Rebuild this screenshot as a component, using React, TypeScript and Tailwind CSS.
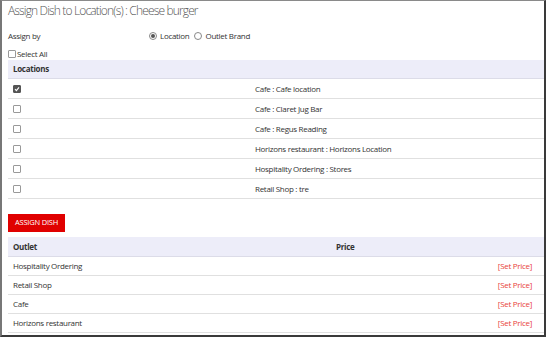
import React from "react";

const locations = [
  { name: "Cafe : Cafe location", checked: true },
  { name: "Cafe : Claret Jug Bar", checked: false },
  { name: "Cafe : Regus Reading", checked: false },
  { name: "Horizons restaurant : Horizons Location", checked: false },
  { name: "Hospitality Ordering : Stores", checked: false },
  { name: "Retail Shop : tre", checked: false },
];

const outlets = ["Hospitality Ordering", "Retail Shop", "Cafe", "Horizons restaurant"];

function Box({ checked }: { checked?: boolean }) {
  return (
    <span
      className={`inline-flex items-center justify-center w-[8px] h-[8px] rounded-[1px] border ${
        checked ? "bg-[#555] border-[#555]" : "bg-white border-[#999]"
      }`}
    >
      {checked && (
        <svg width="6" height="6" viewBox="0 0 6 6">
          <path d="M1 3.2 L2.4 4.6 L5 1.4" stroke="white" strokeWidth="1.1" fill="none" />
        </svg>
      )}
    </span>
  );
}

function Radio({ checked }: { checked?: boolean }) {
  return (
    <span className="inline-flex items-center justify-center w-[8px] h-[8px] rounded-full border border-[#888] bg-white">
      {checked && <span className="w-[4px] h-[4px] rounded-full bg-[#555]" />}
    </span>
  );
}

export default function App() {
  return (
    <div
      className="w-[546px] h-[337px] overflow-hidden bg-white border-t border-l-2 border-r-2 border-b-2 border-t-[#8a8a8a] border-l-[#777] border-r-[#3a3a3a] border-b-[#3a3a3a] text-[#333]"
      style={{ fontFamily: '"Open Sans", "Noto Sans", sans-serif' }}
    >
      <div className="pl-[6px] pr-0">
        <div className="h-[20px] flex items-center text-[12px] font-light text-[#555] tracking-[-0.85px]">
          Assign Dish to Location(s) : Cheese burger
        </div>
        <div className="h-[30px] flex items-center text-[8px] tracking-[-0.3px]">
          <span className="w-[141px]">Assign by</span>
          <span className="flex items-center gap-[3px]">
            <Radio checked />
            <span>Location</span>
          </span>
          <span className="flex items-center gap-[3px] ml-[5px]">
            <Radio />
            <span>Outlet Brand</span>
          </span>
        </div>
        <div className="h-[9px] -mt-[2px] flex items-center gap-[1px] text-[8px] tracking-[-0.3px]">
          <Box />
          <span>Select All</span>
        </div>
        <div className="mt-[2px] text-[8px] tracking-[-0.3px]">
          <div className="h-[19px] flex items-center bg-[#ededf9] border-b border-[#dcdce8] pl-[5px] font-bold">
            Locations
          </div>
          {locations.map((l) => (
            <div key={l.name} className="h-[20px] flex items-center border-b border-[#e0e0e0]">
              <div className="w-[247px] pl-[5px] flex items-center">
                <Box checked={l.checked} />
              </div>
              <span>{l.name}</span>
            </div>
          ))}
        </div>
        <div className="mt-[15px] flex">
          <div className="h-[18px] w-[57px] flex items-center justify-center bg-[#e00000] text-white text-[7.5px] tracking-[-0.2px] uppercase">
            Assign Dish
          </div>
        </div>
        <div className="mt-[5px] text-[8px] tracking-[-0.3px]">
          <div className="h-[20px] flex items-center bg-[#ededf9] border-b border-[#dcdce8] pl-[5px] font-bold">
            <span className="w-[323px]">Outlet</span>
            <span>Price</span>
          </div>
          {outlets.map((o) => (
            <div key={o} className="h-[19px] flex items-center justify-between border-b border-[#e0e0e0] pl-[5px] pr-[12px]">
              <span>{o}</span>
              <span className="text-[#e8413b]">[Set Price]</span>
            </div>
          ))}
        </div>
      </div>
    </div>
  );
}
